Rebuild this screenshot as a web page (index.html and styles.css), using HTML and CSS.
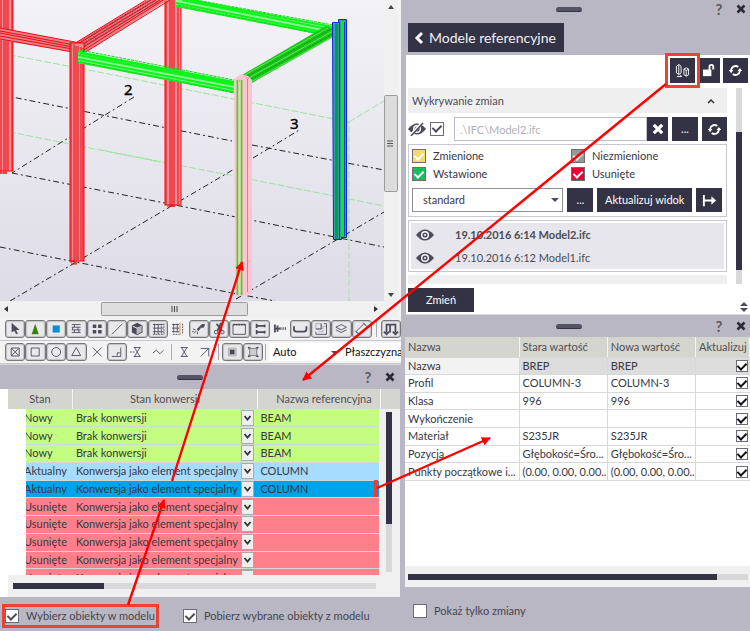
FILE: index.html
```html
<!DOCTYPE html>
<html lang="pl">
<head>
<meta charset="utf-8">
<title>Modele referencyjne</title>
<link rel="stylesheet" href="styles.css">
</head>
<body>
<svg class="defs" aria-hidden="true">
  <symbol id="eye" viewBox="0 0 18 12"><path d="M0 6Q9-5 18 6Q9 17 0 6Z" fill="#4c4a5c"/><circle cx="9" cy="6" r="4" fill="#fff"/><circle cx="9" cy="6" r="2.6" fill="#4c4a5c"/><circle cx="9" cy="6" r="1" fill="#fff"/></symbol>
  <symbol id="refresh" viewBox="0 0 16 16"><path d="M3.300 7.500A4.800 4.800 0 0 1 11 4.200M12.700 8.500A4.800 4.800 0 0 1 5 11.800" fill="none" stroke="#fff" stroke-width="2"/><path d="M.8 7.500h5L3.300 10.800zM15.200 8.500h-5L12.700 5.200z" fill="#fff"/></symbol>
  <symbol id="close" viewBox="0 0 10 10"><path d="M1.5 1.5l7 7M8.500 1.500l-7 7" fill="none" stroke="currentColor" stroke-width="2.600"/></symbol>
  <symbol id="hourglass" viewBox="0 0 20 18"><path d="M6 4h8M6 14h8M7 4l6 10M13 4L7 14" class="ln"/></symbol>
</svg>
<div class="app">
<main class="left">
  <section class="view">
    <svg class="scene" viewBox="0 0 384 301" preserveAspectRatio="xMinYMin slice" role="img" aria-label="Widok 3D modelu">
      <defs><linearGradient id="sky" x2="0" y2="1"><stop offset="0" stop-color="#f3f2f6"/><stop offset="1" stop-color="#dddce7"/></linearGradient></defs>
      <rect width="384" height="301" fill="url(#sky)"/>
      <g class="guide">
        <path d="M0 53L78 68L349 122L349 301M349 122L384 101M0 130L160 162M101 150L234 176L384 206"/>
      </g>
      <g class="axis">
        <path d="M2 95L232 141M252 145L384 170M12 173L236 217L384 247M0 247L232 293L275 301M134 97L12 173M10 301L236 168M253 158L301 129M236 299L384 212"/>
      </g>
      <g class="redcol">
        <rect x="-2" y="-2" width="15" height="173"/><path d="M1 0V174M4 0V174M6 0V174M8 0V171M12 0V171M0 173H7"/>
        <rect x="165" y="-2" width="16" height="207"/><path d="M166 0V205M170 0V206M172 0V207M174 0V207M178 0V204M167 206H175"/>
      </g>
      <g class="redbeam">
        <path class="fill" d="M0 28L80 43V53L0 40ZM77 42L147 0H168L84 53Z"/>
        <path d="M0 28L80 43M0 31L80 46M0 33L78 48M0 36L78 50M0 39L78 53M77 42L146 0M78 44L151 0M80 46L156 0M82 48L160 0M84 50L163 0M84 53L170 0"/>
        <path class="dash" d="M78 43L148 1M80 45L154 1M82 47L159 1"/>
      </g>
      <g class="redcol"><rect x="70" y="43" width="14" height="218"/><path d="M71 43V263M74 44V263M76 46V264M78 46V260M81 47V261M83 48V261M71 264H77"/></g>
      <g class="greenbeam">
        <path class="fill" d="M78 51L234 81V93L78 63ZM176 0H194L333 26V36L176 5Z"/>
        <path d="M78 52L234 82M78 55L234 85M78 59L234 89M78 62L234 92M80 53L234 83M190 0L333 27M182 0L333 30M176 3L333 34M176 6L333 36"/>
        <path class="dash" d="M80 50L234 80M80 62L234 93M196 0L333 25M178 5L333 37"/>
      </g>
      <path d="M242 75L326 26L335 29V36L252 83Z" fill="#18c818"/>
      <path d="M243 76L328 28M247 79L333 31M251 82L334 36" stroke="#63df5d" fill="none"/>
      <path d="M246 77L331 29M249 80L333 34" stroke="#099b10" stroke-dasharray="2 1" fill="none"/>
      <g>
        <path d="M332.500 22.500H338.500V19.500H346.500V237.500H341.500V239.500H333.500Z" fill="#38a0a3" stroke="#1023e8"/>
        <path d="M336.500 24V239" stroke="#089a50" stroke-width="3"/><path d="M339.500 22V239" stroke="#0c3fc0"/><path d="M342.500 21V236" stroke="#00f213" stroke-width="3"/><path d="M344.500 22V236" stroke="#1435de"/>
      </g>
      <g>
        <path d="M234 79L241 74L248 76L252 80V293L247 296H235Z" fill="#ffc4d2"/>
        <path d="M237.500 80V295M241.500 80V295" stroke="#5fc62f" stroke-width="2"/><path d="M247.500 79V292" stroke="#8fae5c"/><path d="M239.500 80V295" stroke="#c2e9b0" stroke-width="2"/><path d="M237 81H243M246 78H250" stroke="#d07c8d" stroke-dasharray="1 1"/>
      </g>
      <text x="124" y="95">2</text><text x="290" y="129">3</text>
    </svg>
    <div class="vbar"><svg viewBox="0 0 14 301" preserveAspectRatio="none"><path d="M7 5l3 4H4zM7 297l3-4H4z" fill="#444"/><rect x=".5" y="95.500" width="13" height="96" rx="1" fill="#dcdcdc" stroke="#9b9b9b"/><path d="M3 141h6M3 143.500h6M3 146h6" stroke="#555"/></svg></div>
    <div class="hbar"><svg viewBox="0 0 398 16" preserveAspectRatio="none"><path d="M4 8l4-3v6zM378 8l-4-3v6z" fill="#333"/><rect x="101.500" y="1.500" width="146" height="13" rx="1" fill="#dedede" stroke="#9b9b9b"/><path d="M172 5v6M174.500 5v6M177 5v6" stroke="#444"/></svg></div>
  </section>
  <div class="tools">
    <div class="row row1">
      <button class="t on" aria-label="Wybierz"><svg viewBox="0 0 20 18"><path d="M6 2v11l3-2 2 4 2-1-2-4h4z" fill="#4c4a5c"/></svg></button>
      <button class="t on" aria-label="Komponent"><svg viewBox="0 0 20 18"><path d="M10 3l4 12H6z" fill="#3a8012"/></svg></button>
      <button class="t on" aria-label="Część"><svg viewBox="0 0 20 18"><path d="M6 5h8v8H6z" fill="#0090dc"/></svg></button>
      <button class="t on" aria-label="Siatki"><svg viewBox="0 0 20 18"><path d="M5 4h10M5 7h10M5 10h10M5 13h10M8 4v3M12 7v3M8 10v3M13 10v3M6 7v3" class="ln"/></svg></button>
      <button class="t on" aria-label="Punkty"><svg viewBox="0 0 20 18"><path d="M5 4h4v4H5zM11 4h4v4h-4zM5 10h4v4H5zM11 10h4v4h-4z" fill="#4c4a5c"/></svg></button>
      <button class="t on" aria-label="Linia"><svg viewBox="0 0 20 18"><path d="M4 15L16 3" class="ln"/></svg></button>
      <button class="t on" aria-label="Bryła"><svg viewBox="0 0 20 18"><path d="M10 2l6 3v8l-6 3-6-3V5z" fill="#4c4a5c"/><path d="M5 6l5 2 5-2M10 8v7" stroke="#fff" fill="none"/><path d="M10.500 8.500L15 6.500v6l-4.500 2z" fill="#bbb"/></svg></button>
      <button class="t on" aria-label="Siatka"><svg viewBox="0 0 20 18"><path d="M4 4h12M4 8h12M4 12h12M6 3v12M10 3v12" class="ln"/><path d="M13.500 3v12M16.500 3v12M4 15h13" class="ln dots"/></svg></button>
      <button class="t" aria-label="Linia siatki"><svg viewBox="0 0 20 18"><path d="M3 4h8M3 8h8M3 12h8M5 3v10M9 3v10" class="ln"/><path d="M12 2v14" stroke="#f47c20"/><path d="M15 3v12M4 15h7" class="ln dots"/></svg></button>
      <button class="t on" aria-label="Spoina"><svg viewBox="0 0 20 18"><path d="M8 9l5-5h3l-1 3-3 0-3 4z" fill="#4c4a5c" stroke="#4c4a5c"/><path d="M3 9l3 1M4 14l3-3M8 15v-3M2 12h2" class="ln"/></svg></button>
      <button class="t on" aria-label="Cięcie"><svg viewBox="0 0 20 18"><path d="M12 2L8 11M7 3l6 8" class="ln bold"/><circle cx="6.500" cy="12.500" r="2" class="ln"/><circle cx="13.500" cy="12.500" r="2" class="ln"/></svg></button>
      <button class="t on" aria-label="Widok"><svg viewBox="0 0 20 18"><path d="M3 4h14v11H3z" class="ln"/><path d="M3 4h14" class="ln bold dots"/></svg></button>
      <button class="t on" aria-label="Śruby"><svg viewBox="0 0 20 18"><path d="M6 3v5M6 10v5M6 5.500h8M6 12.500h8M15 4v3M15 11v3" class="ln bold"/></svg></button>
      <button class="t" aria-label="Śruba"><svg viewBox="0 0 20 18"><path d="M4 4v9M7 5v7M4 8.500h6" class="ln bold"/><path d="M10 7v3M12 7v3M14 7v3M16 7v3" class="ln"/></svg></button>
      <button class="t on" aria-label="Pręt"><svg viewBox="0 0 20 18"><path d="M3 6v3q0 3 3 3h8q3 0 3-3V6" class="ln bold"/></svg></button>
      <button class="t on" aria-label="Powierzchnia"><svg viewBox="0 0 20 18"><path d="M4 3h6v6H4zM7 12h5V6h4" class="ln pale"/><path d="M4 12v3h12V3h-3M4 9h6V3" class="ln"/></svg></button>
      <button class="t on" aria-label="Warstwy"><svg viewBox="0 0 20 18"><path d="M10 4l6 3-6 3-6-3zM4 10l6 3 6-3" class="ln"/></svg></button>
      <button class="t on" aria-label="Płaszczyzna"><svg viewBox="0 0 20 18"><path d="M3 12l9-9 4 4-9 8zM2 11l3 3M11 2l3 3" class="ln"/></svg></button>
      <span class="sep"></span>
      <button class="t on" aria-label="Rama"><svg viewBox="0 0 20 18"><path d="M5 13V4h10v9M9 4v9M2 12l3 3 3-3M12 12l3 3 3-3" class="ln bold"/></svg></button>
    </div>
    <div class="row row2">
      <button class="t on" aria-label="Punkty odniesienia"><svg viewBox="0 0 20 18"><path d="M5.500 4.500h9v9h-9zM6 5l8 8M14 5l-8 8" class="ln"/></svg></button>
      <button class="t on" aria-label="Koniec"><svg viewBox="0 0 20 18"><path d="M5.500 4.500h9v9h-9z" class="ln"/></svg></button>
      <button class="t on" aria-label="Środek"><svg viewBox="0 0 20 18"><circle cx="10" cy="9" r="5" class="ln"/></svg></button>
      <button class="t on" aria-label="Połowa"><svg viewBox="0 0 20 18"><path d="M10 4l5 9H5z" class="ln"/></svg></button>
      <button class="t" aria-label="Przecięcie"><svg viewBox="0 0 20 18"><path d="M5 4l10 10M15 4L5 14" class="ln"/></svg></button>
      <button class="t on" aria-label="Prostopadle"><svg viewBox="0 0 20 18"><path d="M4 14h10V4M10 13v-3h3" class="ln"/></svg></button>
      <button class="t" aria-label="Najbliższy"><svg viewBox="0 0 20 18"><use href="#hourglass"/><path d="M2 9h6" class="ln dots"/></svg></button>
      <button class="t" aria-label="Dowolny"><svg viewBox="0 0 20 18"><path d="M4 10l4-3 4 4 4-4" class="ln"/></svg></button>
      <span class="sep"></span>
      <button class="t" aria-label="Przedłużenie"><svg viewBox="0 0 20 18"><use href="#hourglass"/></svg></button>
      <button class="t" aria-label="Kierunek"><svg viewBox="0 0 20 18"><path d="M5 14l9-9M5 5h9v9" class="ln"/></svg></button>
      <span class="sep"></span>
      <button class="t on" aria-label="Obiekt"><svg viewBox="0 0 20 18"><path d="M5 4h10v10H5z" fill="#bbb"/><path d="M7.500 6.500h5v5h-5z" fill="#4c4a5c"/></svg></button>
      <button class="t on" aria-label="Zespół"><svg viewBox="0 0 20 18"><path d="M6 5h8v8H6z" fill="#ccc" stroke="#77777b"/><path d="M4 4h3M13 4h3M4 14h3M13 14h3M5 3v3M15 3v3M5 12v3M15 12v3" class="ln"/></svg></button>
      <span class="sep"></span>
      <label class="pick"><select aria-label="Płaszczyzna robocza"><option>Auto</option></select></label>
      <label class="pick cut"><select aria-label="Widok płaszczyzny"><option>Płaszczyzna</option></select></label>
    </div>
  </div>
  <section class="panel">
    <header class="bar"><span class="grip"></span><button aria-label="Pomoc">?</button><button aria-label="Zamknij"><svg><use href="#close"/></svg></button></header>
    <div class="objects">
      <div class="heads" aria-hidden="true"><span>Stan</span><span>Stan konwersji</span><span>Nazwa referencyjna</span><span></span></div>
      <div class="listarea">
        <div class="clip">
        <table class="states" aria-label="Stan konwersji">
          <tr class="new"><td><span>Nowy</span></td><td><select aria-label="Stan konwersji"><option>Brak konwersji</option></select></td><td>BEAM</td></tr>
          <tr class="new"><td><span>Nowy</span></td><td><select aria-label="Stan konwersji"><option>Brak konwersji</option></select></td><td>BEAM</td></tr>
          <tr class="new"><td><span>Nowy</span></td><td><select aria-label="Stan konwersji"><option>Brak konwersji</option></select></td><td>BEAM</td></tr>
          <tr class="cur"><td><span>Aktualny</span></td><td><select aria-label="Stan konwersji"><option>Konwersja jako element specjalny</option></select></td><td>COLUMN</td></tr>
          <tr class="sel"><td><span>Aktualny</span></td><td><select aria-label="Stan konwersji"><option>Konwersja jako element specjalny</option></select></td><td>COLUMN</td></tr>
          <tr class="del"><td><span>Usunięte</span></td><td><select aria-label="Stan konwersji"><option>Konwersja jako element specjalny</option></select></td><td></td></tr>
          <tr class="del"><td><span>Usunięte</span></td><td><select aria-label="Stan konwersji"><option>Konwersja jako element specjalny</option></select></td><td></td></tr>
          <tr class="del"><td><span>Usunięte</span></td><td><select aria-label="Stan konwersji"><option>Konwersja jako element specjalny</option></select></td><td></td></tr>
          <tr class="del"><td><span>Usunięte</span></td><td><select aria-label="Stan konwersji"><option>Konwersja jako element specjalny</option></select></td><td></td></tr>
          <tr class="del"><td><span>Usunięte</span></td><td><select aria-label="Stan konwersji"><option>Konwersja jako element specjalny</option></select></td><td></td></tr>
        </table>
        </div>
        <div class="track down"><i></i></div>
      </div>
      <div class="track across short"><i></i></div>
    </div>
    <footer class="foot">
      <label><input type="checkbox" checked>Wybierz obiekty w modelu</label>
      <label><input type="checkbox" checked>Pobierz wybrane obiekty z modelu</label>
    </footer>
  </section>
</main>
<aside class="right">
  <section class="models">
    <header class="bar"><span class="grip"></span><button aria-label="Pomoc">?</button><button aria-label="Zamknij"><svg><use href="#close"/></svg></button></header>
    <button class="back"><svg viewBox="0 0 10 14"><path d="M8 2L3 7l5 5" fill="none" stroke="#fff" stroke-width="3"/></svg>Modele referencyjne</button>
    <div class="sheet">
      <div class="acts">
        <button class="dark" aria-label="Porównaj obiekty"><svg viewBox="0 0 16 16"><path d="M1.500 3.500l2.500-2 2.500 2v7L4 12.500l-2.500-2zM4 2v10M9.500 6.500L12 5l2.500 1.500v6L12 14l-2.500-1.500zM9.500 6.500L12 8l2.500-1.500M12 8v6M2 14.500h5l-1.500-2" fill="none" stroke="#fff"/></svg></button>
        <button class="dark lock" aria-label="Odblokuj"><svg viewBox="0 0 16 16"><path d="M1 7h9v7H1z" fill="#fff"/><path d="M8 8V4q0-2 2-2t2 2v3" fill="none" stroke="#fff" stroke-width="2"/></svg></button>
        <button class="dark" aria-label="Odśwież"><svg><use href="#refresh"/></svg></button>
      </div>
      <div class="scrolled">
        <div class="stack">
          <button class="section">Wykrywanie zmian<svg viewBox="0 0 8 6"><path d="M1 5l3-3 3 3" fill="none" stroke="#333" stroke-width="1.500"/></svg></button>
          <div class="file">
            <svg class="eye" viewBox="0 0 18 14"><use href="#eye" y="1" width="18" height="12"/><path d="M3 13L14 1" stroke="#fff" stroke-width="3"/><path d="M3 14L15 1" stroke="#4c4a5c" stroke-width="1.500"/></svg>
            <input type="checkbox" checked aria-label="Porównaj z plikiem">
            <input type="text" value=".\IFC\Model2.ifc" aria-label="Plik">
            <button class="dark clear" aria-label="Wyczyść"><svg><use href="#close"/></svg></button>
            <button class="dark">...</button>
            <button class="dark" aria-label="Wczytaj ponownie"><svg><use href="#refresh"/></svg></button>
          </div>
          <div class="box">
            <div class="legend">
              <label><input type="checkbox" class="yellow" checked>Zmienione</label>
              <label><input type="checkbox" class="grey" checked>Niezmienione</label>
              <label><input type="checkbox" class="green" checked>Wstawione</label>
              <label><input type="checkbox" class="red" checked>Usunięte</label>
            </div>
            <div class="apply">
              <label class="drop"><select aria-label="Ustawienia"><option>standard</option></select></label>
              <button class="dark">...</button>
              <button class="dark wide">Aktualizuj widok</button>
              <button class="dark" aria-label="Przejdź"><svg viewBox="0 0 16 16"><path d="M2 2v12M3 8h10" fill="none" stroke="#fff" stroke-width="2"/><path d="M10 3.500l5 4.500-5 4.500z" fill="#fff"/></svg></button>
            </div>
          </div>
          <div class="box">
            <ul class="versions">
              <li><svg><use href="#eye"/></svg><b>19.10.2016 6:14 Model2.ifc</b></li>
              <li><svg><use href="#eye"/></svg>19.10.2016 6:12 Model1.ifc</li>
            </ul>
          </div>
          <div class="strip"></div>
        </div>
        <div class="track down"><i></i></div>
      </div>
      <div class="change"><button class="dark">Zmień</button><svg viewBox="0 0 8 10"><path d="M4 0l4 4H0zM4 10l4-4H0z" fill="#4c4a5c"/></svg></div>
    </div>
  </section>
  <section class="panel props">
    <header class="bar"><span class="grip"></span><button aria-label="Pomoc">?</button><button aria-label="Zamknij"><svg><use href="#close"/></svg></button></header>
    <div class="grid">
      <table class="values">
        <thead><tr><th>Nazwa</th><th>Stara wartość</th><th>Nowa wartość</th><th>Aktualizuj</th></tr></thead>
        <tbody>
          <tr class="hot"><td>Nazwa</td><td>BREP</td><td>BREP</td><td><input type="checkbox" checked aria-label="Aktualizuj nazwę"></td></tr>
          <tr><td>Profil</td><td>COLUMN-3</td><td>COLUMN-3</td><td><input type="checkbox" checked aria-label="Aktualizuj profil"></td></tr>
          <tr><td>Klasa</td><td>996</td><td>996</td><td><input type="checkbox" checked aria-label="Aktualizuj klasę"></td></tr>
          <tr><td>Wykończenie</td><td></td><td></td><td><input type="checkbox" checked aria-label="Aktualizuj wykończenie"></td></tr>
          <tr><td>Materiał</td><td>S235JR</td><td>S235JR</td><td><input type="checkbox" checked aria-label="Aktualizuj materiał"></td></tr>
          <tr><td>Pozycja</td><td>Głębokość=Śro...</td><td>Głębokość=Śro...</td><td><input type="checkbox" checked aria-label="Aktualizuj pozycję"></td></tr>
          <tr><td>Punkty początkowe i...</td><td>(0.00, 0.00, 0.00...</td><td>(0.00, 0.00, 0.00...</td><td><input type="checkbox" checked aria-label="Aktualizuj punkty"></td></tr>
        </tbody>
      </table>
    </div>
    <div class="track across"><i></i></div>
    <footer class="foot"><label><input type="checkbox">Pokaż tylko zmiany</label></footer>
  </section>
</aside>
<svg class="marks" viewBox="0 0 750 631" preserveAspectRatio="none" aria-hidden="true">
  <defs><marker id="tip" viewBox="0 0 10 10" refX="9" refY="5" markerWidth="9" markerHeight="9" markerUnits="userSpaceOnUse" orient="auto"><path d="M0 0l10 5-10 5z" fill="#f00"/></marker></defs>
  <g fill="none" stroke="#ea4335" stroke-width="3"><path d="M666.500 54.500h32v32h-32zM3.500 605.500h154v21H3.500z"/><path d="M376 480v17" stroke-width="4"/></g>
  <g fill="none" stroke="#f00" stroke-width="2.400"><path d="M666 84L303 380" marker-end="url(#tip)"/><path d="M377 488L490 438" marker-end="url(#tip)"/><path d="M128 605L164 500" marker-end="url(#tip)"/><path d="M172 481L242 262" marker-end="url(#tip)"/></g>
</svg>
</div>
</body>
</html>
```
FILE: styles.css
```css
* { box-sizing: border-box; }
body { margin: 0; font: 11px/16px Lato, "Open Sans", sans-serif; color: #383743; background: #b8b7c3; }
button, select, input { font: inherit; color: inherit; margin: 0; padding: 0; border: 0; border-radius: 0; background: none; }
svg { display: block; }
.defs { position: absolute; width: 0; height: 0; }
.app { position: relative; display: grid; grid-template-columns: 401fr 349fr; min-height: 100vh; }
.left, .right { min-width: 0; display: flex; flex-direction: column; }
.marks { position: absolute; inset: 0; width: 100%; height: 100%; pointer-events: none; }
.ln { fill: none; stroke: #4c4a5c; }
.pale { stroke: #a6a6ae; }
.bold { stroke-width: 2; }
.dots { stroke-dasharray: 2 1; }

/* 3D view */
.view { display: grid; grid-template-columns: 1fr 14px; grid-template-rows: auto 17px; background: #f0f0f0; border-right: 3px solid #f4f4f6; }
.scene { width: 100%; aspect-ratio: 384 / 301; }
.vbar svg { width: 14px; height: 100%; }
.hbar { grid-column: 1 / 3; }
.hbar svg { width: 100%; height: 16px; }
.guide { fill: none; stroke: #98e79d; stroke-dasharray: 7 2; }
.axis { fill: none; stroke: #222; stroke-dasharray: 6 3 2 3; }
.redcol rect { fill: #f08a92; stroke: #f00; }
.redcol path, .redbeam path { fill: none; stroke: #f00610; }
.redbeam .fill { fill: #e98088; stroke: none; }
.redbeam .dash { stroke: #9b3038; stroke-dasharray: 2 1; }
.greenbeam path { fill: none; stroke: #0cf41a; stroke-width: 2; }
.greenbeam .fill { fill: #8bf08e; stroke: none; }
.greenbeam .dash { stroke: #0cdc18; stroke-width: 1; stroke-dasharray: 3 1; }
.scene text { font: 15px "Noto Sans", sans-serif; fill: #000; stroke: #000; stroke-width: 0.4px; }

/* Toolbars */
.tools { background: #f3f3f4; border-bottom: 1px solid #d5d5da; }
.row { display: grid; height: 23px; padding: 2px 0 2px 5px; align-items: center; border-bottom: 1px solid #c6c6cc; }
.row1 { grid-template-columns: repeat(18, 1fr) 9px 20px; }
.row2 { grid-template-columns: repeat(8, 1fr) 6px 1fr 1fr 7px 1fr 1fr 6px 74px 58px; }
.t { height: 18px; min-width: 0; border: 1px solid transparent; border-radius: 3px; }
.t svg { width: 100%; height: 16px; }
.t.on { background: #e9e9eb; border-color: #77777b; box-shadow: inset 0 0 1px 1px #c3c3c6; }
.sep { justify-self: center; width: 1px; height: 16px; background: #a8a8ae; }
.pick { background: #fff; height: 18px; position: relative; }
.pick select { appearance: none; width: 100%; padding-left: 4px; height: 18px; color: #111; }
.pick::after, .drop::after { content: ""; position: absolute; right: 4px; top: 8px; border: 4px solid transparent; border-top-color: #4c4a5c; }
.cut { margin-left: 1px; }
.cut select { padding-left: 1px; }
.cut::after { content: none; }

/* Docked panels */
.panel { flex: 1; display: flex; flex-direction: column; }
.bar { display: grid; height: 24px; align-items: center; }
.left .bar { grid-template-columns: 177px 26px 1fr 22px 22px; }
.right .bar { grid-template-columns: 155px 26px 1fr 26px 18px; height: 22px; }
.right .models .bar { height: 18px; }
.grip { height: 5px; border-radius: 3px; background: #555467; border-bottom: 1px solid #333244; }
.bar button { font-size: 15px; font-weight: 700; color: #5b5b60; grid-column: 4; grid-row: 1; }
.bar button:last-child { grid-column: 5; color: #292938; }
.bar .grip { grid-column: 2; grid-row: 1; }
.bar svg { width: 10px; height: 10px; margin: auto; }

input[type="checkbox"] { appearance: none; flex: none; width: 14px; height: 14px; border: 1px solid #6c6b78; background: #fff; display: grid; place-items: center; }
input[type="checkbox"]:checked::after { content: ""; width: 4px; height: 7px; margin-bottom: 2px; border: solid #4c4a5c; border-width: 0 2px 2px 0; transform: rotate(45deg); }
.track { background: #d8d8da; }
.track i { display: block; background: #343345; }
.track.down { width: 6px; }
.track.across { height: 6px; }
.track.across i { height: 6px; }

.objects { background: #f0f0f0; border-left: 8px solid #fff; margin-right: 1px; padding-bottom: 8px; }
.heads { display: grid; grid-template-columns: 64fr 185fr 123fr 20fr; background: #d5d5cf; height: 20px; line-height: 19px; text-align: center; color: #4e4e55; }
.heads span + span { border-left: 1px solid #f4f4f4; }
.heads span:nth-child(3) { padding-left: 10px; }
.listarea { display: grid; grid-template-columns: 371fr 21fr; height: 167px; border-bottom: 1px solid #f0f0f0; }
.clip { overflow: hidden; padding-left: 18px; background: #fff; }
.states { width: 100%; height: 178px; border-collapse: collapse; table-layout: fixed; }
.states td { padding: 0; height: 17px; line-height: 16px; border-bottom: 1px solid #d4d6d8; }
.states td:nth-child(1) { width: 13%; overflow: hidden; }
.states td:nth-child(1) span { display: block; margin-left: -2px; white-space: nowrap; }
.states td:nth-child(2) { width: 52%; padding-left: 4px; }
.states td:nth-child(3) { padding-left: 5px; }
.states select { display: block; appearance: none; width: 100%; height: 16px; background: url("data:image/svg+xml,%3Csvg xmlns='http://www.w3.org/2000/svg' width='14' height='16'%3E%3Crect x='.5' y='.5' width='12' height='15' fill='%23eee' stroke='%23aaa'/%3E%3Cpath d='M3.500 6l3 3.500L9.500 6' fill='none' stroke='%23333' stroke-width='1.800'/%3E%3C/svg%3E") right no-repeat; }
.new { background: #c4fd7f; }
.cur { background: #a5dcff; }
.sel { background: #00a2e8; }
.del { background: #ff808a; }
.listarea .track { margin: 3px 0 3px 7px; }
.listarea .track i { height: 112px; }
.across.short { margin: 7px 24px 0 5px; }
.across.short i { width: 25%; }
.foot { display: flex; gap: 28px; padding: 11px 5px 0; color: #46454f; }
.foot label { display: flex; align-items: center; gap: 7px; }

/* Reference models */
.models { display: flex; flex-direction: column; }
.back { align-self: flex-start; display: flex; align-items: center; gap: 5px; margin: 5px 0 3px 7px; height: 29px; padding: 0 8px 0 6px; background: #343345; color: #f0f0f4; font-size: 14px; }
.back svg { width: 10px; height: 14px; }
.sheet { background: #fff; margin-left: 5px; padding: 3px 2px 2px; border-bottom: 1px solid #ddd; }
.dark { display: grid; place-items: center; background: #343345; color: #fff; height: 24px; }
.dark svg { width: 15px; height: 15px; }
.acts { display: flex; justify-content: flex-end; gap: 3px; }
.acts .dark { width: 25px; height: 25px; }
.acts .lock { width: 22px; }
.scrolled { display: grid; grid-template-columns: 1fr 6px; gap: 9px; margin: 5px 6px 0 0; }
.scrolled .track i { height: 138px; margin-top: 44px; }
.stack { min-width: 0; display: flex; flex-direction: column; gap: 3px; }
.section { display: flex; justify-content: space-between; align-items: center; height: 25px; padding: 0 12px 0 4px; background: #efefef; color: #4c4b56; }
.section svg { width: 8px; height: 6px; }
.file { display: grid; grid-template-columns: 18px 14px 1fr 21px 26px 25px; align-items: end; column-gap: 4px; height: 25px; }
.file .eye { width: 18px; height: 14px; align-self: center; }
.file input[type="checkbox"] { align-self: center; }
.file input[type="text"] { min-width: 0; height: 24px; margin: 0 -4px 0 6px; padding-left: 5px; border: 1px solid #bdbcc8; color: #b0b0b6; }
.file .clear svg { width: 12px; height: 12px; }
.box { border: 1px solid #c9c8d2; padding: 3px; }
.legend { display: grid; grid-template-columns: 159fr 152fr; row-gap: 2px; }
.legend label { display: flex; align-items: center; gap: 7px; }
.legend input[type="checkbox"]:checked::after { border-color: #fff; }
.legend .yellow { background: #f5dc6a; }
.legend .grey { background: #98989b; }
.legend .green { background: #18bd5c; }
.legend .red { background: #ea0035; }
.apply { display: grid; grid-template-columns: 152fr 26fr 95fr 26fr; gap: 4px; margin: 6px 1px 1px 0; }
.drop { position: relative; }
.drop select { appearance: none; width: 100%; height: 24px; padding-left: 10px; border: 1px solid #8e8d9a; background: #fff; }
.drop::after { top: 10px; }
.versions { list-style: none; margin: -1px; padding: 0; background: #e6e6ec; color: #4c4b56; }
.versions li { display: grid; grid-template-columns: 18px 1fr; gap: 21px; align-items: center; height: 23px; padding-left: 5px; }
.versions svg { width: 18px; height: 12px; }
.strip { height: 9px; background: #efefef; }
.change { display: flex; justify-content: space-between; align-items: flex-end; margin-top: 4px; }
.change .dark { width: 66px; }
.change svg { width: 8px; height: 10px; }

/* Property comparison */
.grid { background: #fff; margin-left: 4px; min-height: 229px; }
.values { width: 100%; height: 144px; border-collapse: collapse; table-layout: fixed; }
.values th, .values td { padding: 0 0 0 3px; line-height: 16px; text-align: left; font-weight: 400; white-space: nowrap; overflow: hidden; border-bottom: 1px solid #d8d8da; border-right: 1px solid #d8d8da; }
.values th { height: 20px; background: #d5d5cf; color: #4e4e55; border-right-color: #f4f4f4; }
.values th:first-child { width: 114px; }
.values th:last-child { width: 54px; }
.hot td { background: #dcdcdc; }
.hot td:first-child { background: #f2f2f2; }
.values td:last-child { padding-right: 2px; border-right: 0; }
.values input[type="checkbox"] { width: 12px; height: 12px; margin-left: auto; }
.values input[type="checkbox"]:checked::after { border-color: #111; }
.props .across { margin-left: 4px; border: solid #f0f0f0; border-width: 8px 2px 7px 3px; height: 21px; }
.props .across i { width: 91%; }
.props .foot { padding: 16px 12px 0; }
```
